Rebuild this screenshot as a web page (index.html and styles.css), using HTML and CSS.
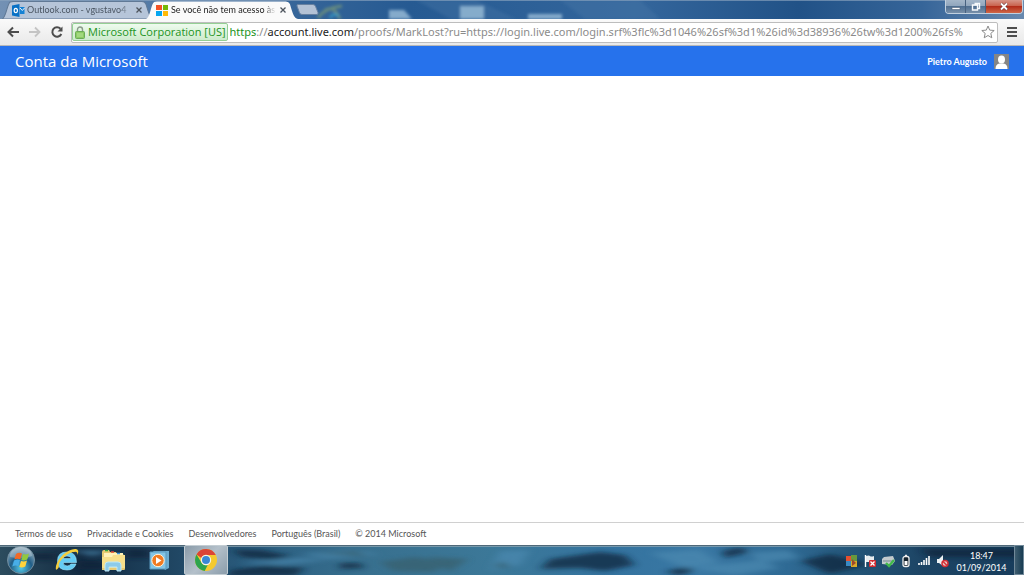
FILE: index.html
```html
<!DOCTYPE html>
<html lang="pt-BR">
<head>
<meta charset="utf-8">
<title>Conta da Microsoft</title>
<link rel="stylesheet" href="styles.css">
</head>
<body>
<div class="titlebar">
  <svg class="backdrop" viewBox="0 0 1024 19" preserveAspectRatio="none" aria-hidden="true">
    <defs>
      <linearGradient id="sky"><stop offset="0" stop-color="#7391b4"/><stop offset=".28" stop-color="#376699"/><stop offset=".4" stop-color="#265a92"/><stop offset=".62" stop-color="#34669c"/><stop offset=".78" stop-color="#215287"/><stop offset=".9" stop-color="#366599"/><stop offset="1" stop-color="#6889af"/></linearGradient>
      <filter id="soft"><feGaussianBlur stdDeviation="1.6"/></filter>
    </defs>
    <path fill="url(#sky)" d="M0 0h1024v19H0z"/>
    <g filter="url(#soft)">
      <path d="M416 0h60l40 19h-65zM560 0h80l20 19h-75z" fill="#4878aa" opacity=".35"/>
      <path d="M318 18q6-10 24-12M325 10q9-5 15 9" stroke="#8eaa70" stroke-width="3" fill="none" opacity=".55"/>
      <path d="M330 18q3-6 9-2" stroke="#35a0ca" stroke-width="3" fill="none" opacity=".7"/>
      <path d="M389 10h15l8 9h-23zM460 6h24v13h-24zM528 14h34v5h-34z" fill="#8fb4d2" opacity=".9"/>
    </g>
    <path d="M0 .5h1024" stroke="#8ba4bf" opacity=".65"/>
  </svg>
  <div class="tabs">
    <div class="tab">
      <svg class="tab-shape" viewBox="0 0 150 18" preserveAspectRatio="none" aria-hidden="true"><path d="M0 18C4 17 5 3 8 1Q9 .5 11 .5H138Q141 .5 142 3C145 13 146 17 150 18z" fill="#b6c5d9" stroke="#607996"/></svg>
      <svg class="favicon" viewBox="0 0 13 13" aria-hidden="true"><path d="M0 1.500 7.500 0v13L0 11.500z" fill="#0871c5"/><ellipse cx="3.800" cy="6.500" rx="1.600" ry="2.200" fill="none" stroke="#fff" stroke-width="1.200"/><path d="M8 3h4.500v7H8z" fill="#1682d4"/><path d="m8 4 2.300 2.500L12.500 4" fill="none" stroke="#fff" stroke-width=".9"/></svg>
      <button class="tab-label">Outlook.com - vgustavo4</button>
      <button class="tab-close" aria-label="Fechar guia"><svg viewBox="0 0 6 6"><path d="m.5.5 5 5m0-5-5 5"/></svg></button>
    </div>
    <div class="tab active">
      <svg class="tab-shape" viewBox="0 0 150 18" preserveAspectRatio="none" aria-hidden="true"><path d="M0 18C4 17 5 3 8 1Q9 .5 11 .5H138Q141 .5 142 3C145 13 146 17 150 18z" fill="#fafafa"/></svg>
      <svg class="favicon" viewBox="0 0 13 13" aria-hidden="true"><path fill="#f35325" d="M0 1h6v5H0z"/><path fill="#75b807" d="M7 1h5v5H7z"/><path fill="#05a6f0" d="M0 7h6v5H0z"/><path fill="#ffba08" d="M7 7h5v5H7z"/></svg>
      <button class="tab-label">Se você não tem acesso às</button>
      <button class="tab-close" aria-label="Fechar guia"><svg viewBox="0 0 6 6"><path d="m.5.5 5 5m0-5-5 5"/></svg></button>
    </div>
    <button class="new-tab" aria-label="Nova guia"><svg viewBox="0 0 23 11"><path d="M2 .5h15q2 0 2.600 2l2.400 6q.5 2-1 2H6q-2 0-2.600-2L1 2Q.5.500 2 .5z" fill="#b3c2d5" stroke="#6781a0"/></svg></button>
  </div>
  <div class="window-controls">
    <button aria-label="Minimizar"><svg viewBox="0 0 12 9"><path d="M2 5.500h8v2H2z" fill="#fff" stroke="#4d6078" stroke-width=".6"/></svg></button>
    <button aria-label="Restaurar"><svg viewBox="0 0 12 9"><path d="M4.500 1.500h5v5h-1.500M2.500 3h5v5h-5z" fill="none" stroke="#f7f9fb" stroke-width="1.400"/></svg></button>
    <button class="close" aria-label="Fechar"><svg viewBox="0 0 12 9"><path d="m3 1.500 6 6m0-6-6 6" stroke="#5a3137" stroke-width="3"/><path d="m3 1.500 6 6m0-6-6 6" stroke="#fff" stroke-width="1.900"/></svg></button>
  </div>
</div>

<div class="toolbar">
  <button class="nav" aria-label="Voltar"><svg viewBox="0 0 14 14"><path d="M13 7H2m5-4.500L2.500 7 7 11.500" fill="none" stroke="#4d4d4d" stroke-width="2"/></svg></button>
  <button class="nav" aria-label="Avançar"><svg viewBox="0 0 14 14"><path d="M1 7h11M7 2.500 11.500 7 7 11.500" fill="none" stroke="#c4c4c4" stroke-width="1.800"/></svg></button>
  <button class="nav" aria-label="Recarregar"><svg viewBox="0 0 14 14"><path d="M11.300 9A4.700 4.700 0 1 1 10.500 3.800" fill="none" stroke="#4d4d4d" stroke-width="2"/><path d="M12.500 1.500v5h-5z" fill="#4d4d4d"/></svg></button>
  <div class="omnibox">
    <button class="identity">
      <svg viewBox="0 0 10 13" aria-hidden="true"><path d="M2.500 6V3.500a2.500 2.500 0 0 1 5 0V6" fill="none" stroke="#8b9a8b" stroke-width="1.400"/><rect x=".5" y="5.500" width="9" height="7" rx="1" fill="#8ccc63" stroke="#6bab58"/><path d="M2 8h6M2 10h6" stroke="#b7e49c"/></svg>
      <span>Microsoft Corporation [US]</span>
    </button>
    <div class="url" role="textbox" contenteditable="true" spellcheck="false" aria-label="Endereço"><span class="scheme">https</span>://<span class="host">account.live.com</span>/proofs/MarkLost?ru=https://login.live.com/login.srf%3flc%3d1046%26sf%3d1%26id%3d38936%26tw%3d1200%26fs%</div>
    <button class="star" aria-label="Favoritos"><svg viewBox="0 0 14 14"><path d="m7 1 1.700 4.100 4.500.4-3.400 2.900 1 4.400L7 10.500l-3.800 2.300 1-4.400L.8 5.500l4.500-.4z" fill="#fff" stroke="#8b8b8b"/></svg></button>
  </div>
  <button class="menu" aria-label="Menu"><svg viewBox="0 0 10 10"><path d="M0 1h10M0 5h10M0 9h10" stroke="#4d4d4d" stroke-width="2"/></svg></button>
</div>

<header class="account-header">
  <a class="brand" href="#">Conta da Microsoft</a>
  <a class="user" href="#">Pietro Augusto
    <svg viewBox="0 0 15 15" aria-hidden="true"><path fill="#858585" d="M0 0h15v15H0z"/><ellipse cx="7.500" cy="5.500" rx="3.500" ry="4" fill="#fff"/><path d="M1.500 15q0-5 4-5.500h4q4 .5 4 5.500z" fill="#fff"/></svg>
  </a>
</header>

<main class="content"></main>

<footer class="footer">
  <a href="#">Termos de uso</a>
  <a href="#">Privacidade e Cookies</a>
  <a href="#">Desenvolvedores</a>
  <a href="#">Português (Brasil)</a>
  <span>© 2014 Microsoft</span>
</footer>

<div class="taskbar">
  <svg class="backdrop" viewBox="0 0 1024 30" preserveAspectRatio="none" aria-hidden="true">
    <defs>
      <linearGradient id="sea"><stop offset="0" stop-color="#2c4c5e"/><stop offset=".08" stop-color="#132b42"/><stop offset=".25" stop-color="#2b5e80"/><stop offset=".36" stop-color="#38708f"/><stop offset=".48" stop-color="#3c7898"/><stop offset=".6" stop-color="#34739f"/><stop offset=".68" stop-color="#3a78a4"/><stop offset=".77" stop-color="#2f6a94"/><stop offset=".83" stop-color="#245679"/><stop offset=".9" stop-color="#1d4565"/><stop offset="1" stop-color="#173c5b"/></linearGradient>
      <filter id="waves"><feGaussianBlur stdDeviation="5 2"/></filter>
    </defs>
    <path fill="url(#sea)" d="M0 0h1024v30H0z"/>
    <g filter="url(#waves)" opacity=".7">
      <path d="M26 8h30v7H26zM80 16h20l20 8H76zM125 4h25v9h-25zM232 25l35-5 38 3-10 8h-68zM232 5l30 0 30 6-20 4-30-3zM340 18h20l5 5-25 1zM540 24l10-10 50-7 25 3 10 10-30 6-25-3zM722 6l18-4 10 5-25 6zM665 27l20-6 10 4-15 6zM800 16l30-7 40 10-40 10zM920 4h110v8H930z" fill="#0c2439"/>
      <path d="M240 18l60-5 30 2-50 5zM300 9l50-4 30 4-50 5zM500 6l30-1-10 15-30 5zM650 8l50-3 20 13-35 5zM690 23l70-8 20 8-45 7zM750 8l38-3 12 8-40 5zM70 5l40 1-18 5z" fill="#4b89b0"/>
      <path d="M380 17l35-5 38 6-20 9-40-1zM428 12l40 2-18 13zM315 9l40-3 14 5zM493 22l10-6 8 7z" fill="#395f6c"/>
    </g>
    <path d="M0 .5h1024" stroke="#506979"/>
    <path d="M0 1.500h1024" stroke="#91a9b5" opacity=".7"/>
  </svg>
  <nav class="apps" aria-label="Barra de tarefas">
    <button class="app start" aria-label="Iniciar"><svg viewBox="0 0 30 30"><defs><radialGradient id="orb" cx=".5" cy=".8" r=".8"><stop stop-color="#53c8e7"/><stop offset=".5" stop-color="#215e87"/><stop offset="1" stop-color="#a6bac5"/></radialGradient></defs><circle cx="15" cy="15" r="13.500" fill="url(#orb)" stroke="#718c9d"/><path d="M4 12a11 10 0 0 1 22-1q-8 4-22 1z" fill="#cad8df" opacity=".38"/><path d="M10 9q3-2 6-.5l-1.700 6Q11 13 8.300 14.500z" fill="#f26a26"/><path d="M17 9q3 1 6-.5l-1.700 6q-3 1.500-6 .5z" fill="#91c83e"/><path d="M8 15.500q3-1.500 6-.5l-1.700 6q-3-1.200-6 .5z" fill="#48aee8"/><path d="M15 16q3 1 6-.5l-1.700 6q-3 1.500-6 .5z" fill="#ffd33b"/></svg></button>
    <button class="app" aria-label="Internet Explorer"><svg viewBox="0 0 26 26"><path fill-rule="evenodd" d="M22.500 15.500H9q.5 3.500 4.200 3.500 2.500 0 3.600-2h5.200Q20 23 13 23 3.500 23 3.500 13.800 3.500 5 13 5q9.600 0 9.500 10.500zM9 11.600h8.300Q16.700 9 13 9t-4 2.600z" fill="#65ccf4" stroke="#a1e6fc" stroke-width=".6"/><path d="M5 20Q1 26 2 19C4 10 15 1 22 2q4 1 1 6 1-4-3-3C14 5 3 15 5 20z" fill="#f5ce3c"/></svg></button>
    <button class="app" aria-label="Explorador"><svg viewBox="0 0 26 26"><path d="M2 5q0-2 2-2h5l1 2h6l1 2h6l2 3v12q0 1-1 1H2z" fill="#e8ca71"/><path d="M4 6h19v14H4z" fill="#fff1b8"/><path d="M5 3.500h3" stroke="#32a63c" stroke-width="1.500"/><path d="M11 5h3" stroke="#de4737" stroke-width="1.500"/><path d="M17 6.500h3" stroke="#3a92d6" stroke-width="1.500"/><path d="M2 10h10l1-2h12v13H2z" fill="#f7df8b"/><path d="M5 24v-6q0-3 3-3h10q3 0 3 3v6h-4v-4H9v4z" fill="#8dcbe9" stroke="#bce7f7"/></svg></button>
    <button class="app" aria-label="Windows Media Player"><svg viewBox="0 0 26 26"><path d="M7 4h16v17l-4 2z" fill="#6cacd0"/><path d="M4 5h16v17H4z" fill="#83c5e6" stroke="#5a99be"/><circle cx="12" cy="13.500" r="6.200" fill="#f17b22" stroke="#fff2d9"/><path d="m10 10 5.500 3.500L10 17z" fill="#fff"/></svg></button>
    <button class="app open" aria-label="Google Chrome"><svg viewBox="0 0 26 26"><circle cx="13" cy="13" r="11" fill="#f4ca2e"/><path d="M3.500 7.500A11 11 0 0 1 22.800 8H13a5 5 0 0 0-4.600 3z" fill="#db4437"/><path d="M3.500 7.500 8.700 16q2 3 6 2l-3 5.900A11 11 0 0 1 3.500 7.500z" fill="#2da44e"/><circle cx="13" cy="13" r="5.200" fill="#f6f4e9"/><circle cx="13" cy="13" r="4" fill="#3988d5"/></svg></button>
  </nav>
  <div class="tray">
    <svg viewBox="0 0 14 14" aria-hidden="true"><path d="M1 2h5v5H1z" fill="#e6502f"/><path d="M6 1h6v6H6z" fill="#69983c"/><path d="M1 7h5v5H1z" fill="#3989c2"/><path d="M6 7h6v6H6z" fill="#d8aa2c"/><path d="m7 5 4 4-4 3z" fill="#9d482d"/></svg>
    <svg viewBox="0 0 14 14" aria-hidden="true"><path d="M2.500 1v12" stroke="#fff" stroke-width="1.400"/><path d="M3 2q3-1 4 0t4 0v6H3z" fill="#e7ecee"/><rect x="6" y="6" width="7" height="7" rx="1" fill="#d32c32"/><path d="m7.500 7.500 4 4m0-4-4 4" stroke="#fff" stroke-width="1.300"/></svg>
    <svg viewBox="0 0 14 14" aria-hidden="true"><path d="m3 3 9-1 2 5-3 4-10-1V5z" fill="#c3cacd"/><path d="M2 7h10" stroke="#778991"/><path d="m5 9 3 3 5-6" fill="none" stroke="#41b84a" stroke-width="2.400"/></svg>
    <svg viewBox="0 0 14 14" aria-hidden="true"><rect x="4" y="2.500" width="6" height="10" rx="2" fill="#14232e" stroke="#eee" stroke-width="1.300"/><path d="M6 1.500h2" stroke="#eee" stroke-width="1.500"/><path d="M5.500 7h3v4h-3z" fill="#fff"/></svg>
    <svg viewBox="0 0 14 14" aria-hidden="true"><path d="M2 9v2M4.500 8v3M7 6v5M9.500 4v7M12 2v9" stroke="#fff" stroke-width="1.600"/></svg>
    <svg viewBox="0 0 14 14" aria-hidden="true"><path d="M2 5h2l4-4v11L4 9H2z" fill="#edf1f3"/><circle cx="10" cy="9.500" r="3" fill="#eac6c5" stroke="#d42f35" stroke-width="1.500"/><path d="m8 7.500 4 4" stroke="#d42f35" stroke-width="1.500"/></svg>
  </div>
  <button class="clock"><time>18:47</time><time>01/09/2014</time></button>
  <button class="show-desktop" aria-label="Mostrar área de trabalho"></button>
</div>
</body>
</html>
```

FILE: styles.css
```css
* { box-sizing: border-box; }

body {
  margin: 0;
  min-height: 100vh;
  display: flex;
  flex-direction: column;
  background: #fff;
  font-family: Lato, Roboto, sans-serif;
  font-size: 9px;
}

button {
  margin: 0;
  padding: 0;
  border: 0;
  background: none;
  color: inherit;
  font: inherit;
}

a { color: inherit; text-decoration: none; }
svg { display: block; flex: none; }

.backdrop {
  position: absolute;
  inset: 0;
  width: 100%;
  height: 100%;
  z-index: -1;
}

.titlebar {
  position: relative;
  z-index: 0;
  display: flex;
  justify-content: space-between;
  height: 19px;
  overflow: hidden;
}

.tabs { display: flex; align-items: flex-end; padding-left: 2px; }

.tab {
  position: relative;
  z-index: 0;
  display: flex;
  align-items: center;
  width: 152px;
  height: 18px;
  padding: 0 12px 0 10px;
  color: #4b5663;
}

.tab.active { z-index: 1; margin-left: -8px; color: #222; }

.tab-shape {
  position: absolute;
  inset: 0;
  z-index: -1;
  width: 100%;
  height: 100%;
}

.favicon { width: 13px; height: 13px; margin-right: 2px; }

.tab-label {
  flex: 1;
  overflow: hidden;
  white-space: nowrap;
  text-align: left;
  line-height: 16px;
  mask-image: linear-gradient(to right, #000 88%, transparent);
}

.tab-close { margin-left: 4px; }
.tab-close svg { width: 6px; height: 6px; fill: none; stroke: #4d545c; stroke-width: 1.3; }

.new-tab { align-self: center; margin-left: -2px; }
.new-tab svg { width: 23px; height: 11px; }

.window-controls {
  display: flex;
  height: 14px;
  margin-right: 1px;
  border: 1px solid #c1d0df;
  border-top: 0;
  border-radius: 0 0 4px 4px;
  overflow: hidden;
}

.window-controls button {
  display: grid;
  place-items: center;
  width: 20px;
  border-right: 1px solid #47617f;
  background: linear-gradient(#a4b6c9, #91a6bd 45%, #506f91 50%, #7890aa);
}

.window-controls .close {
  width: 36px;
  border: 0;
  background: linear-gradient(#d79588, #c9634e 45%, #b32d1a 50%, #cf6747);
}

.window-controls svg { width: 12px; height: 9px; }

.toolbar {
  display: flex;
  align-items: center;
  height: 27px;
  padding: 0 7px 0 6px;
  background: linear-gradient(#fafafa, #e9e9e9);
  border-bottom: 1px solid #b8b8b8;
  font-family: "Open Sans", "Noto Sans", sans-serif;
  font-size: 11px;
}

.nav { margin-right: 8px; }
.nav + .omnibox { margin-left: -1px; }
.nav svg { width: 14px; height: 14px; }

.omnibox {
  display: flex;
  flex: 1;
  align-items: center;
  min-width: 0;
  height: 21px;
  padding-right: 2px;
  border: 1px solid #bdbdbd;
  border-radius: 2px;
  background: #fff;
}

.identity {
  display: flex;
  align-items: center;
  gap: 3px;
  height: 18px;
  padding: 0 1px 0 2px;
  border: 1px solid #94cf94;
  border-radius: 2px;
  background: linear-gradient(#eefbee, #cdebcd);
  color: #219321;
  line-height: 16px;
  white-space: nowrap;
}

.identity svg { width: 10px; height: 13px; }

.url {
  flex: 1;
  min-width: 0;
  margin-left: 2px;
  overflow: hidden;
  color: #8b8b8b;
  font-family: "Noto Sans", "Open Sans", sans-serif;
  line-height: 18px;
  white-space: nowrap;
}

.scheme { color: #219321; }
.host { color: #222; }

.star { margin-left: 2px; }
.star svg { width: 14px; height: 14px; }
.menu { margin-left: 9px; }
.menu svg { width: 10px; height: 10px; }

.account-header {
  display: flex;
  align-items: center;
  justify-content: space-between;
  height: 30px;
  padding: 0 15px;
  background: #2672ec;
  color: #fff;
}

.brand {
  font-family: "Open Sans", "Noto Sans", sans-serif;
  font-size: 15px;
  line-height: 24px;
}

.user {
  display: flex;
  align-items: center;
  gap: 7px;
  font-weight: 700;
}

.user svg { width: 15px; height: 15px; }

.content { flex: 1; }

.footer {
  display: flex;
  align-items: center;
  gap: 15px;
  height: 23px;
  padding: 0 15px 2px;
  border-top: 1px solid #d0d0d0;
  color: #555;
}

.taskbar {
  position: relative;
  z-index: 0;
  display: flex;
  height: 30px;
  overflow: hidden;
}

.apps { display: flex; flex: 1; }

.app {
  display: grid;
  place-items: center;
  width: 46px;
  height: 30px;
}

.app svg { width: 26px; height: 26px; }
.app.start { width: 42px; }
.app.start svg { width: 30px; height: 30px; }
.app.start + .app { margin-left: 2px; }

.app.open {
  width: 44px;
  margin-left: 2px;
  border: 1px solid #c3cdd3;
  border-radius: 2px;
  background: linear-gradient(135deg, #8a9ba9, #b4c0ca 50%, #8b9dab);
}

.tray { display: flex; align-items: center; gap: 4px; padding-top: 2px; }
.tray svg { width: 14px; height: 14px; }

.clock {
  display: flex;
  flex-direction: column;
  align-items: center;
  justify-content: center;
  width: 65px;
  padding-top: 3px;
  color: #fff;
  line-height: 12px;
}

.show-desktop {
  width: 10px;
  border: 1px solid #718999;
  background: linear-gradient(90deg, #3e5d70, #183c52);
}
```
